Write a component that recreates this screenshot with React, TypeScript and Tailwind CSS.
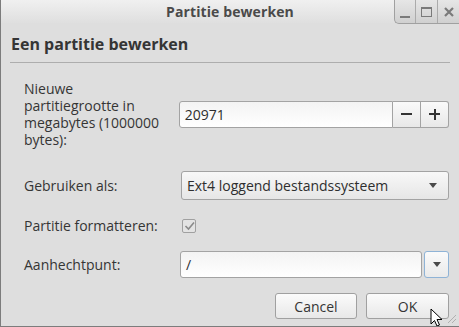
import React from "react";

const font = { fontFamily: '"Open Sans", "DejaVu Sans", sans-serif' };

function Arrow() {
  return (
    <svg width="8" height="5" viewBox="0 0 8 5">
      <path d="M0 0 L8 0 L4 5 Z" fill="#4a4a4a" />
    </svg>
  );
}

export default function App() {
  return (
    <div
      className="relative w-[459px] h-[327px] bg-[#dedede] border-l border-b border-[#7c7c7c] flex flex-col overflow-hidden text-[#353535]"
      style={font}
    >
      {/* Title bar */}
      <div className="relative h-[23px] shrink-0 bg-gradient-to-b from-[#f0f0f0] to-[#dfdfdf] flex items-center justify-center">
        <span className="text-[14px] font-bold text-[#4a4a4a] tracking-[0.1px]">Partitie bewerken</span>
        <div className="absolute right-0 top-0 h-[24px] flex border-l border-b border-[#a0a0a0] rounded-bl-[5px] bg-gradient-to-b from-[#e6e6e6] to-[#d0d0d0]">
          <div className="w-[21px] flex items-center justify-center border-r border-[#ababab]">
            <div className="w-[10px] h-[2px] bg-[#7a7a7a] mt-[10px]" />
          </div>
          <div className="w-[22px] flex items-center justify-center border-r border-[#ababab]">
            <div className="w-[11px] h-[10px] border border-[#7a7a7a] border-t-[2px]" />
          </div>
          <div className="w-[21px] flex items-center justify-center">
            <svg width="10" height="10" viewBox="0 0 10 10">
              <path d="M1 1 L9 9 M9 1 L1 9" stroke="#7a7a7a" strokeWidth="2.2" />
            </svg>
          </div>
        </div>
      </div>

      {/* Heading */}
      <div className="pl-[10px] pt-[10px] h-[39px]">
        <div className="text-[16px] font-bold leading-[22px] text-[#353535]">Een partitie bewerken</div>
      </div>
      <div className="mx-[9px] h-px bg-[#adadad]" />

      {/* Form */}
      <div className="pl-[23px] pr-[10px] flex flex-col">
        {/* Row 1 */}
        <div className="flex items-center mt-[17px]">
          <div className="w-[155px] text-[14px] leading-[17px]">
            Nieuwe
            <br />
            partitiegrootte in
            <br />
            megabytes (1000000
            <br />
            bytes):
          </div>
          <div className="flex h-[27px] w-[271px]">
            <div className="flex-1 border border-[#a3a3a3] rounded-l-[3px] bg-gradient-to-b from-[#f3f3f3] to-white flex items-center pl-[5px] text-[14px] text-[#2e2e2e]">
              20971
            </div>
            <div className="w-[28px] border-y border-r border-[#a3a3a3] bg-gradient-to-b from-[#fafafa] to-[#e8e8e8] flex items-center justify-center">
              <div className="w-[11px] h-[2px] bg-[#333]" />
            </div>
            <div className="w-[28px] border-y border-r border-[#a3a3a3] rounded-r-[3px] bg-gradient-to-b from-[#fafafa] to-[#e8e8e8] flex items-center justify-center relative">
              <div className="w-[11px] h-[2px] bg-[#333]" />
              <div className="absolute w-[2px] h-[11px] bg-[#333]" />
            </div>
          </div>
        </div>

        {/* Row 2 */}
        <div className="flex items-center mt-[23px]">
          <div className="w-[157px] text-[14px] leading-[17px]">Gebruiken als:</div>
          <div className="w-[268px] h-[29px] border border-[#a3a3a3] rounded-[3px] bg-gradient-to-b from-[#f8f8f8] to-[#e6e6e6] flex items-center justify-between pl-[5px] pr-[11px] text-[14px] text-[#2e2e2e]">
            <span>Ext4 loggend bestandssysteem</span>
            <Arrow />
          </div>
        </div>

        {/* Row 3 */}
        <div className="flex items-center mt-[17px]">
          <div className="w-[158px] text-[14px] leading-[17px]">Partitie formatteren:</div>
          <div className="w-[14px] h-[14px] border border-[#a0a0a0] rounded-[2px] bg-[#e3e3e3] flex items-center justify-center">
            <svg width="11" height="10" viewBox="0 0 11 10">
              <path d="M1.5 5 L4.5 8 L10 1.5" stroke="#8a8a8a" strokeWidth="1.6" fill="none" />
            </svg>
          </div>
        </div>

        {/* Row 4 */}
        <div className="flex items-center mt-[17px]">
          <div className="w-[156px] text-[14px] leading-[17px]">Aanhechtpunt:</div>
          <div className="w-[242px] h-[27px] border border-[#a3a3a3] rounded-[3px] bg-gradient-to-b from-[#f3f3f3] to-white flex items-center pl-[5px] text-[14px] text-[#2e2e2e]">
            /
          </div>
          <div className="ml-[2px] w-[25px] h-[27px] border border-[#8fb3d6] rounded-[3px] bg-gradient-to-b from-[#fafafa] to-[#eaeaea] flex items-center justify-center">
            <Arrow />
          </div>
        </div>

        {/* Buttons */}
        <div className="flex justify-end gap-[9px] mt-[15px]">
          <div className="w-[82px] h-[26px] border border-[#a0a0a0] rounded-[3px] bg-gradient-to-b from-[#fbfbfb] to-[#e8e8e8] flex items-center justify-center text-[14px] text-[#353535]">
            Cancel
          </div>
          <div className="w-[83px] h-[26px] border border-[#a0a0a0] rounded-[3px] bg-gradient-to-b from-[#fbfbfb] to-[#e8e8e8] flex items-center justify-center text-[14px] text-[#353535]">
            OK
          </div>
        </div>
      </div>

      {/* resize grip */}
      <svg className="absolute right-[2px] bottom-[2px]" width="12" height="12" viewBox="0 0 12 12">
        <path d="M11 3 L3 11 M11 7 L7 11" stroke="#b0b0b0" strokeWidth="1" />
      </svg>

      {/* cursor */}
      <svg className="absolute left-[429px] top-[308px]" width="14" height="19" viewBox="0 0 14 19">
        <path d="M1 1 L1 16 L4.5 12.5 L7 18 L9.5 17 L7 11.5 L12 11.5 Z" fill="white" stroke="black" strokeWidth="1" />
      </svg>
    </div>
  );
}
